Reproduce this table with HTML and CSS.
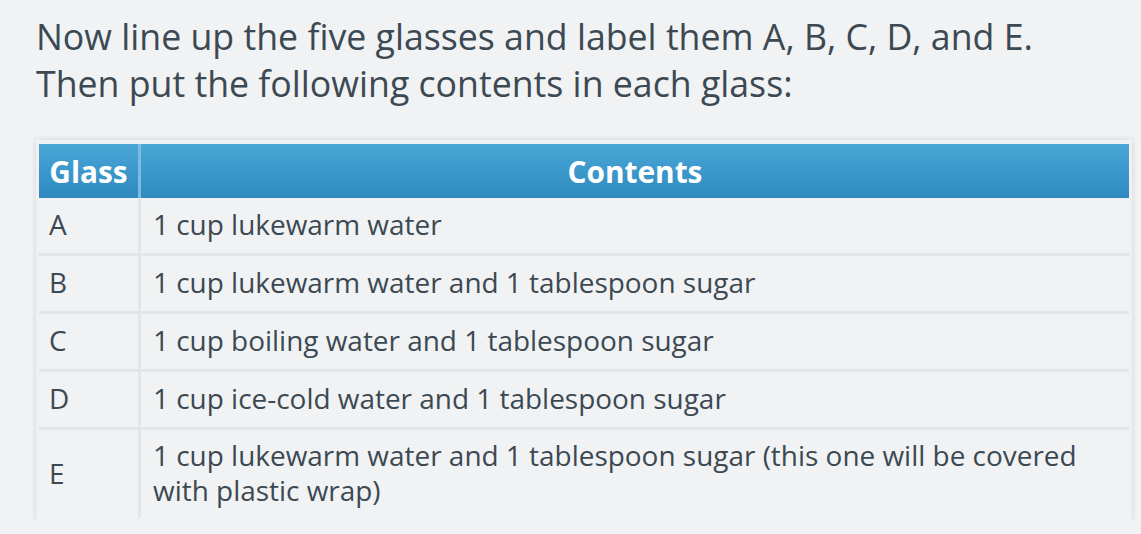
FILE: index.html
```html
<!DOCTYPE html>
<html>
<head>
<meta charset="utf-8">
<link rel="stylesheet" href="styles.css">
</head>
<body>
<div class="page">
  <p class="intro">Now line up the five glasses and label them A, B, C, D, and E.<br>Then put the following contents in each glass:</p>
  <div class="table-wrap">
    <table class="glasses">
      <thead>
        <tr><th class="col-glass">Glass</th><th class="col-contents">Contents</th></tr>
      </thead>
      <tbody>
        <tr><td class="col-glass">A</td><td class="col-contents">1 cup lukewarm water</td></tr>
        <tr><td class="col-glass">B</td><td class="col-contents">1 cup lukewarm water and 1 tablespoon sugar</td></tr>
        <tr><td class="col-glass">C</td><td class="col-contents">1 cup boiling water and 1 tablespoon sugar</td></tr>
        <tr><td class="col-glass">D</td><td class="col-contents">1 cup ice-cold water and 1 tablespoon sugar</td></tr>
        <tr class="tall"><td class="col-glass">E</td><td class="col-contents">1 cup lukewarm water and 1 tablespoon sugar (this one will be covered with plastic wrap)</td></tr>
      </tbody>
    </table>
  </div>
</div>
</body>
</html>
```
FILE: styles.css
```css
html, body {
  margin: 0;
  padding: 0;
  background: #f0f2f4;
}
.page {
  padding: 13px 0 0 36px;
  width: 1099px;
  font-family: "Open Sans", "Liberation Sans", sans-serif;
  color: #3c4952;
}
.intro {
  margin: 0 0 33px 0;
  font-size: 35.7px;
  line-height: 47px;
}
.table-wrap {
  width: 1090px;
  padding: 4px 3px 3px 3px;
  margin-left: 0;
  background: #eef0f2;
  box-shadow: 0 0 6px rgba(0, 0, 0, 0.13);
}
.glasses {
  width: 100%;
  border-collapse: collapse;
  table-layout: fixed;
  font-size: 27.95px;
}
.glasses th {
  height: 54px;
  padding: 0;
  color: #ffffff;
  font-weight: 700;
  font-size: 29.8px;
  text-align: center;
  background: linear-gradient(#4aa7d8, #2f89bd);
}
.glasses th.col-glass {
  width: 99px;
  border-right: 3px solid #7fbbde;
}
.glasses td {
  padding: 0 12px 2px 12px;
  height: 53px;
  background: #f0f2f4;
  border-bottom: 3px solid #e3e5e7;
  line-height: 35px;
  vertical-align: middle;
}
.glasses td.col-glass {
  padding-left: 10px;
  border-right: 3px solid #e3e5e7;
}
.glasses tr:last-child td {
  border-bottom: 0;
}
.glasses tr.tall td {
  height: 86px;
}
```
